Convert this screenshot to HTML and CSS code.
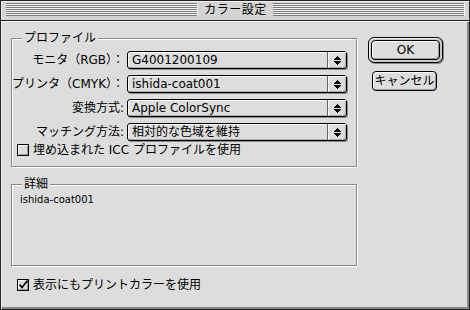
FILE: index.html
```html
<!DOCTYPE html>
<html lang="ja">
<head>
<meta charset="utf-8">
<title>カラー設定</title>
<link rel="stylesheet" href="styles.css">
</head>
<body>
<div class="window">
  <div class="titlebar">
    <div class="stripes"></div>
    <div class="title">カラー設定</div>
    <div class="stripes"></div>
  </div>
  <div class="content">
    <div class="main">
      <div class="group profile">
        <div class="group-title">プロファイル</div>
        <div class="rows">
          <div class="label">モニタ（RGB）：</div>
          <div class="popup"><span class="popup-text">G4001200109</span><span class="popup-arrow"><svg width="7" height="9" viewBox="0 0 7 9"><path d="M3 0h1v1h1v1h1v1h1v1H0V3h1V2h1V1h1z M0 5h7v1H6v1H5v1H4v1H3V8H2V7H1V6H0z" fill="#000"/></svg></span></div>
          <div class="label">プリンタ（CMYK）：</div>
          <div class="popup"><span class="popup-text">ishida-coat001</span><span class="popup-arrow"><svg width="7" height="9" viewBox="0 0 7 9"><path d="M3 0h1v1h1v1h1v1h1v1H0V3h1V2h1V1h1z M0 5h7v1H6v1H5v1H4v1H3V8H2V7H1V6H0z" fill="#000"/></svg></span></div>
          <div class="label">変換方式:</div>
          <div class="popup"><span class="popup-text">Apple ColorSync</span><span class="popup-arrow"><svg width="7" height="9" viewBox="0 0 7 9"><path d="M3 0h1v1h1v1h1v1h1v1H0V3h1V2h1V1h1z M0 5h7v1H6v1H5v1H4v1H3V8H2V7H1V6H0z" fill="#000"/></svg></span></div>
          <div class="label">マッチング方法:</div>
          <div class="popup"><span class="popup-text">相対的な色域を維持</span><span class="popup-arrow"><svg width="7" height="9" viewBox="0 0 7 9"><path d="M3 0h1v1h1v1h1v1h1v1H0V3h1V2h1V1h1z M0 5h7v1H6v1H5v1H4v1H3V8H2V7H1V6H0z" fill="#000"/></svg></span></div>
        </div>
        <div class="check-row"><span class="checkbox"></span><span>埋め込まれた ICC プロファイルを使用</span></div>
      </div>
      <div class="group detail">
        <div class="group-title">詳細</div>
        <div class="detail-text">ishida-coat001</div>
      </div>
      <div class="check-row bottom"><span class="checkbox"><svg width="12" height="12" viewBox="0 0 12 12"><path d="M2.5 5.5 L5 8.5 L10.5 1.5" fill="none" stroke="#000" stroke-width="1.6"/></svg></span><span>表示にもプリントカラーを使用</span></div>
    </div>
    <div class="side">
      <div class="default-ring"><div class="button">OK</div></div>
      <div class="button cancel">キャンセル</div>
    </div>
  </div>
</div>
</body>
</html>
```

FILE: styles.css
```css
* { box-sizing: border-box; }
html, body { margin: 0; padding: 0; }
body {
  width: 470px;
  height: 310px;
  overflow: hidden;
  background: #dddddd;
  font-family: "DejaVu Sans", "Noto Sans CJK JP", sans-serif;
  font-size: 12px;
  color: #000;
}
.window {
  width: 470px;
  height: 310px;
  border: 1px solid #222;
  display: flex;
  flex-direction: column;
  background: #dddddd;
}
.titlebar {
  height: 20px;
  flex: none;
  display: flex;
  align-items: flex-start;
  padding: 2px 4px 0 5px;
  background: #d4d4d4;
  border-bottom: 1px solid #222;
  box-shadow: inset 1px 1px 0 #f2f2f2;
}
.stripes {
  flex: 1;
  height: 13px;
  background: repeating-linear-gradient(to bottom, #7a7a7a 0 1px, #f6f6f6 1px 2px);
  border-right: 1px solid #f6f6f6;
}
.title {
  flex: none;
  padding: 0 6px;
  line-height: 14px;
  height: 14px;
  font-size: 12px;
  letter-spacing: 0.5px;
}
.content {
  flex: 1;
  display: flex;
  padding: 0 0 0 10px;
  box-shadow: inset 1px 1px 0 #f4f4f4, inset -2px -2px 0 #888;
}
.main {
  width: 347px;
  flex: none;
  display: flex;
  flex-direction: column;
}
.group {
  border: 1px solid #888;
  box-shadow: inset 1px 1px 0 #fff, 1px 1px 0 #fff;
  width: 346px;
}
.profile {
  margin-top: 17px;
  padding: 0 0 9px 0;
}
.group-title {
  width: fit-content;
  margin: -8px 0 0 10px;
  padding: 0 2px;
  line-height: 14px;
  height: 14px;
  background: #dddddd;
  position: relative;
}
.rows {
  margin-top: 6px;
  display: grid;
  grid-template-columns: 112px 220px;
  column-gap: 3px;
  row-gap: 6px;
}
.label {
  text-align: right;
  line-height: 18px;
  height: 18px;
  white-space: nowrap;
}
.popup {
  height: 18px;
  display: flex;
  border: 1px solid #000;
  border-radius: 3px;
  background: #dddddd;
  box-shadow: inset 1px 1px 0 #fff, inset -1px -1px 0 #aaa, 1px 1px 0 #888;
}
.popup-text {
  flex: 1;
  padding-left: 4px;
  line-height: 16px;
  white-space: nowrap;
}
.popup-arrow {
  width: 19px;
  flex: none;
  display: flex;
  align-items: center;
  justify-content: center;
  border-left: 1px solid #666;
  box-shadow: inset 1px 1px 0 #fff;
}
.popup-arrow svg { display: block; }
.check-row {
  display: flex;
  align-items: center;
  gap: 4px;
  height: 14px;
  line-height: 14px;
  padding-left: 5px;
  margin-top: 2px;
  white-space: nowrap;
}
.checkbox {
  width: 12px;
  height: 12px;
  flex: none;
  border: 1px solid #000;
  background: #dddddd;
  box-shadow: inset 1px 1px 0 #fff, inset -1px -1px 0 #999;
  display: flex;
  align-items: center;
  justify-content: center;
  overflow: visible;
}
.checkbox svg { display: block; margin: -1px; }
.detail {
  margin-top: 17px;
  height: 82px;
}
.detail-text {
  margin-top: 2px;
  padding-left: 8px;
  line-height: 14px;
  font-size: 10px;
}
.check-row.bottom {
  margin-top: 12px;
  padding-left: 6px;
}
.side {
  margin-left: 10px;
  padding-top: 16px;
  display: flex;
  flex-direction: column;
  align-items: flex-start;
}
.default-ring {
  border: 1px solid #000;
  border-radius: 6px;
  padding: 2px;
  background: #c8c8c8;
  box-shadow: inset 1px 1px 0 #f4f4f4, 1px 1px 0 #888;
}
.button {
  width: 66px;
  height: 20px;
  border: 1px solid #000;
  border-radius: 4px;
  background: #dddddd;
  box-shadow: inset 1px 1px 0 #fff, inset -1px -1px 0 #999;
  text-align: center;
  line-height: 18px;
  white-space: nowrap;
}
.default-ring .button { width: 69px; }
.cancel {
  margin-top: 8px;
  margin-left: 4px;
  width: 65px;
}
```
